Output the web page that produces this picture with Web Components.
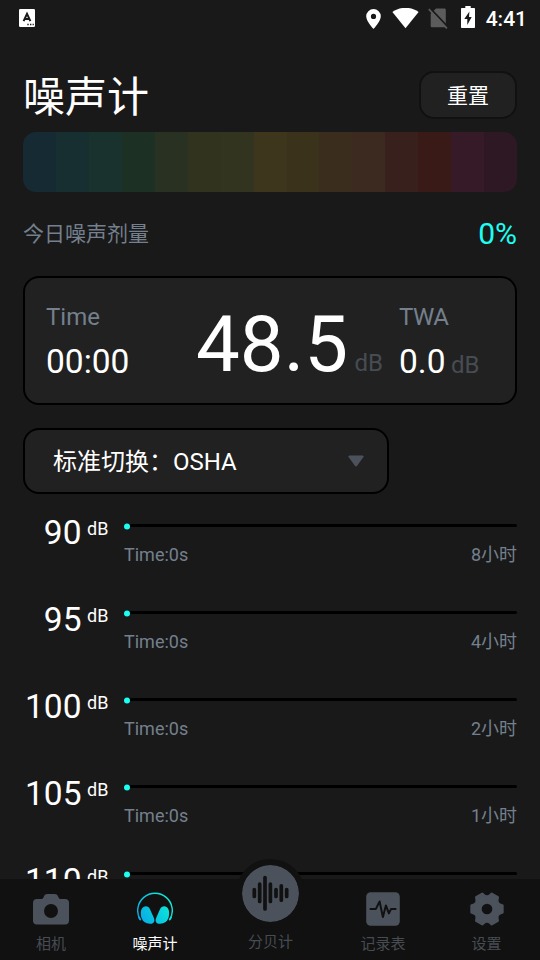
<!DOCTYPE html>
<html lang="zh-CN">
<head>
<meta charset="utf-8">
<title>噪声计</title>
<style>
  html, body { margin: 0; height: 100%; background: #191919; }
  body {
    font-family: Roboto, "Noto Sans CJK SC", sans-serif;
    color: #fff;
    overflow: hidden;
  }
</style>
</head>
<body>
<noise-app></noise-app>

<script>
/** Small helper: attach an open root and fill it. */
class BaseElement extends HTMLElement {
  constructor() {
    super();
    this.attachShadow({ mode: 'open' });
  }

  connectedCallback() {
    this.shadowRoot.innerHTML = this.template();
  }

  template() { return ''; }
}

/** <status-bar> — system icons and clock */
class StatusBar extends BaseElement {
  template() {
    return `
      <style>
        :host { display: flex; align-items: center; height: 36px; padding: 0 13px 0 19px; flex: none; }
        svg { display: block; flex: none; }
        .spacer { flex: 1; }
        .pin { margin: 2px 11px 0 0; }
        .wifi { margin-right: 9px; }
        .sim { margin-right: 13px; }
        .battery { margin: -2px 11px 0 0; }
        .clock { font-size: 21px; font-weight: 500; line-height: 36px; padding-top: 1px; }
      </style>
      <svg width="16" height="18" viewBox="0 0 16 18">
        <rect width="16" height="18" rx="1.2" fill="#fff"/>
        <path d="M4.600 12.200 8 4.800l3.400 7.400M5.900 10h4.200" fill="none" stroke="#191919" stroke-width="2"/>
        <path d="M8.300 15.500h1.400M11 15.500h1.400M13.600 15.500h1.200" stroke="#191919" stroke-width="1.400"/>
      </svg>
      <span class="spacer"></span>
      <svg class="pin" width="15" height="20" viewBox="0 0 15 20">
        <path fill="#fff" fill-rule="evenodd" d="M7.500 0A7.300 7.300 0 0 0 .2 7.300C.2 12.600 7.500 20 7.500 20s7.300-7.400 7.300-12.700A7.300 7.300 0 0 0 7.500 0Zm0 4.800a2.600 2.600 0 1 1 0 5.200 2.600 2.600 0 0 1 0-5.200Z"/>
      </svg>
      <svg class="wifi" width="27" height="21" viewBox="0 0 27 21">
        <path fill="#fff" d="M13.500 20.300.4 4.100C4 1.200 8.500-.2 13.500-.2S23 1.200 26.600 4.100Z"/>
      </svg>
      <svg class="sim" width="20" height="21" viewBox="0 0 20 21">
        <path fill="#5c5c5c" d="M8 .5h8.500c.8 0 1.300.6 1.300 1.300v17.400H4c-.8 0-1.300-.5-1.300-1.300V5.800Z"/>
        <path d="M1.900.1 20 19.300" stroke="#191919" stroke-width="2"/>
        <path d="M.8 1.200 18.900 20.400" stroke="#5c5c5c" stroke-width="1.700"/>
      </svg>
      <svg class="battery" width="14" height="22" viewBox="0 0 14 22">
        <path fill="#fff" d="M4.300 0h5.400v2H13c.6 0 1 .4 1 1v18c0 .6-.4 1-1 1H1c-.6 0-1-.4-1-1V3c0-.6.4-1 1-1h3.300Z"/>
        <path fill="#191919" d="M8.400 5.500 3.300 13h3v6L10.700 11H8Z"/>
      </svg>
      <span class="clock">4:41</span>
    `;
  }
}

/** <page-header> — slotted title with the reset button */
class PageHeader extends BaseElement {
  template() {
    return `
      <style>
        :host { display: flex; justify-content: space-between; align-items: center; height: 48px; margin-top: 35px; }
        h1 { margin: 0; padding-top: 5px; font-size: 42px; font-weight: 400; line-height: 48px; }
        button {
          box-sizing: border-box; width: 98px; height: 48px; padding: 2px 0 0;
          border: 2px solid #111; border-radius: 15px; background: #212121;
          color: #fff; font: inherit; font-size: 21px; line-height: 42px;
        }
      </style>
      <h1><slot></slot></h1>
      <button>重置</button>
    `;
  }
}

/** <level-bar> — dimmed colour scale, one cell per step */
class LevelBar extends BaseElement {
  template() {
    const colors = [
      '#162a33', '#172f31', '#19322d', '#1c3023', '#293222',
      '#32331f', '#323420', '#3d361d', '#3a321b', '#3b2d1e',
      '#3c2920', '#38211c', '#391a16', '#371a28', '#2e1824',
    ];
    return `
      <style>
        :host { display: flex; height: 60px; margin-top: 13px; border-radius: 13px; overflow: hidden; }
        i { flex: 1; }
      </style>
      ${colors.map((c) => `<i style="background:${c}"></i>`).join('')}
    `;
  }
}

/** <dose-row value="0%"> */
class DoseRow extends BaseElement {
  template() {
    return `
      <style>
        :host { display: flex; justify-content: space-between; align-items: center; height: 84px; }
        .label { font-size: 21px; line-height: 30px; padding-bottom: 1px; color: #74808d; }
        .value { font-size: 30px; line-height: 36px; color: #1efff3; }
      </style>
      <span class="label"><slot></slot></span>
      <span class="value">${this.getAttribute('value')}</span>
    `;
  }
}

/** <reading-card> — elapsed time, current level, weighted average */
class ReadingCard extends BaseElement {
  template() {
    return `
      <style>
        :host {
          box-sizing: border-box; display: grid; grid-template-columns: 150px 203px 1fr; align-items: start;
          height: 129px; padding: 25px 0 0 21px;
          border: 2px solid #000; border-radius: 16px; background: #212121;
          white-space: nowrap;
        }
        .label { font-size: 24px; line-height: 28px; color: #74808d; }
        .twa { letter-spacing: -.5px; }
        .value { margin-top: 11px; font-size: 33.5px; line-height: 40px; }
        .main { margin-top: 2px; font-size: 78px; line-height: 80px; }
        .unit { font-size: 24px; color: #474c53; line-height: 1; margin-left: 5.5px; }
        .main .unit { margin-left: 6.5px; }
      </style>
      <div>
        <div class="label">Time</div>
        <div class="value">00:00</div>
      </div>
      <div class="main">48.5<span class="unit">dB</span></div>
      <div>
        <div class="label twa">TWA</div>
        <div class="value">0.0<span class="unit">dB</span></div>
      </div>
    `;
  }
}

/** <standard-select> — closed dropdown */
class StandardSelect extends BaseElement {
  template() {
    return `
      <style>
        :host {
          box-sizing: border-box; display: flex; align-items: center; justify-content: space-between;
          width: 366px; height: 66px; margin-top: 23px; padding: 0 23px 0 28px;
          border: 2px solid #000; border-radius: 16px; background: #212121;
          font-size: 24px; line-height: 30px;
        }
        span { padding-top: 2px; }
        svg { display: block; }
      </style>
      <span><slot></slot></span>
      <svg width="16" height="12" viewBox="0 0 16 12">
        <path fill="#4c525b" d="M1.500.5h13c1 0 1.400.8.8 1.700L9.100 10.800c-.6.8-1.600.8-2.200 0L.7 2.200C.1 1.300.5.500 1.500.500Z"/>
      </svg>
    `;
  }
}

/** <limit-row level="90" limit="8小时"> */
class LimitRow extends BaseElement {
  template() {
    return `
      <style>
        :host { display: grid; grid-template-columns: 58.500px 42.500px 1fr; height: 87px; }
        .level { padding-top: 20px; text-align: right; font-size: 33.5px; line-height: 38px; white-space: nowrap; }
        .unit { padding: 24px 0 0 5.500px; font-size: 18px; line-height: 22px; }
        .track { height: 3px; margin-top: 30px; background: #000; border-radius: 0 2px 2px 0; display: flex; align-items: center; }
        .track i { width: 6px; height: 6px; border-radius: 50%; background: #1efff3; flex: none; transform: translateY(.5px); }
        .info { display: flex; justify-content: space-between; margin-top: 16px; font-size: 18px; line-height: 24px; color: #74808d; }
      </style>
      <div class="level">${this.getAttribute('level')}</div>
      <div class="unit">dB</div>
      <div>
        <div class="track"><i></i></div>
        <div class="info"><span>Time:0s</span><span>${this.getAttribute('limit')}</span></div>
      </div>
    `;
  }
}

/** <nav-item label="..." active raised> — icon goes in the slot */
class NavItem extends BaseElement {
  template() {
    return `
      <style>
        :host { display: flex; flex-direction: column; align-items: center; color: #4c525b; }
        .icon { display: flex; align-items: center; justify-content: center; height: 36px; margin-top: 12px; }
        .label { margin-top: 7px; font-size: 15px; line-height: 20px; color: #474c53; }
        :host([active]) .label { color: #fff; }
        :host([raised]) .icon {
          width: 57px; height: 57px; margin-top: -20px;
          border: 6px solid #111; border-radius: 50%; background: #4c525b; background-clip: padding-box;
        }
        :host([raised]) .label { margin-top: 4px; }
        ::slotted(svg) { display: block; }
      </style>
      <div class="icon"><slot></slot></div>
      <div class="label">${this.getAttribute('label')}</div>
    `;
  }
}

/** <tab-bar> */
class TabBar extends BaseElement {
  gear() {
    // six teeth, the first one pointing right
    const pts = [];
    for (let k = 0; k < 6; k++) {
      [[-30, 12.600], [-21, 13.500], [-13, 16.100], [13, 16.100], [21, 13.500]].forEach(([a, r]) => {
        const t = (k * 60 + a) * Math.PI / 180;
        pts.push(`${(18 + r * Math.cos(t)).toFixed(2)} ${(18 + r * Math.sin(t)).toFixed(2)}`);
      });
    }
    return `M${pts.join('L')}Z`;
  }

  template() {
    return `
      <style>
        :host { display: grid; grid-template-columns: 102px 106px 125px 100px 107px; height: 81px; background: #111; flex: none; position: relative; }
      </style>
      <nav-item label="相机">
        <svg width="36" height="36" viewBox="0 0 36 36">
          <path fill="currentColor" fill-rule="evenodd" d="M4 8h4.500c1.500 0 1.700-1 2.400-2.500C11.700 3.700 12.700 3 14.500 3h7c1.800 0 2.800.7 3.600 2.500C25.800 7 26 8 27.500 8H32a4 4 0 0 1 4 4v17.500a4 4 0 0 1-4 4H4a4 4 0 0 1-4-4V12a4 4 0 0 1 4-4Zm14 5a7 7 0 1 0 0 14 7 7 0 0 0 0-14Z"/>
        </svg>
      </nav-item>
      <nav-item label="噪声计" active>
        <svg width="36" height="36" viewBox="0 0 36 36">
          <defs>
            <linearGradient id="cy" gradientUnits="userSpaceOnUse" x1="2" y1="30" x2="32" y2="10">
              <stop offset="0" stop-color="#08a8e6"/><stop offset="1" stop-color="#0cebd9"/>
            </linearGradient>
          </defs>
          <path d="M3.200 28.500A17.300 17.300 0 1 1 32.800 28.500" fill="none" stroke="url(#cy)" stroke-width="1.400"/>
          <path d="M2 26.500 3.300 28.600M34 26.500 32.700 28.600" fill="none" stroke="url(#cy)" stroke-width="1.800" stroke-linecap="round"/>
          <path fill="url(#cy)" d="M6.500 15.900C9 14.600 11.600 15.400 12.900 17.900L16.900 26.900C18.200 30.300 16.900 32.500 13.700 32.700 9.300 33 6.100 31.300 4.700 27.300 3.100 22.600 3.700 17.500 6.500 15.900Z"/>
          <path fill="url(#cy)" d="M29.500 15.900C27 14.600 24.400 15.400 23.100 17.900L19.100 26.900C17.800 30.300 19.100 32.500 22.300 32.700 26.700 33 29.900 31.300 31.300 27.300 32.900 22.600 32.300 17.500 29.500 15.900Z"/>
        </svg>
      </nav-item>
      <nav-item label="分贝计" raised>
        <svg width="57" height="57" viewBox="0 0 57 57">
          <path d="M12.300 24.500v7M17.700 19.200v17.300M23 12.500v31.500M28.400 19.200v17.300M34 24.500v7M39.300 20.800v14.400M44.700 24.500v7" stroke="#111" stroke-width="3.700" stroke-linecap="round"/>
        </svg>
      </nav-item>
      <nav-item label="记录表">
        <svg width="36" height="36" viewBox="0 0 36 36">
          <rect x="1.200" y="1.200" width="33.600" height="33.600" rx="4.500" fill="currentColor"/>
          <path d="M5.500 17.900h5.400l3.700-7.400 3.300 15.600 3-11.700 3 8 2.200-4.500h4.500" fill="none" stroke="#111" stroke-width="2" stroke-linecap="round" stroke-linejoin="round"/>
        </svg>
      </nav-item>
      <nav-item label="设置">
        <svg width="36" height="36" viewBox="0 0 36 36">
          <path d="${this.gear()}" fill="currentColor" stroke="currentColor" stroke-width="2" stroke-linejoin="round"/>
          <circle cx="18" cy="18" r="5.300" fill="#111"/>
        </svg>
      </nav-item>
    `;
  }
}

/** <noise-app> — the whole screen */
class NoiseApp extends BaseElement {
  template() {
    return `
      <style>
        :host { display: flex; flex-direction: column; height: 960px; width: 540px; overflow: hidden; background: #191919; }
        main { flex: 1; min-height: 0; overflow: hidden; padding: 0 23px; }
      </style>
      <status-bar></status-bar>
      <main>
        <page-header>噪声计</page-header>
        <level-bar></level-bar>
        <dose-row value="0%">今日噪声剂量</dose-row>
        <reading-card></reading-card>
        <standard-select>标准切换：OSHA</standard-select>
        <limit-row level="90" limit="8小时"></limit-row>
        <limit-row level="95" limit="4小时"></limit-row>
        <limit-row level="100" limit="2小时"></limit-row>
        <limit-row level="105" limit="1小时"></limit-row>
        <limit-row level="110" limit=""></limit-row>
      </main>
      <tab-bar></tab-bar>
    `;
  }
}

customElements.define('status-bar', StatusBar);
customElements.define('page-header', PageHeader);
customElements.define('level-bar', LevelBar);
customElements.define('dose-row', DoseRow);
customElements.define('reading-card', ReadingCard);
customElements.define('standard-select', StandardSelect);
customElements.define('limit-row', LimitRow);
customElements.define('nav-item', NavItem);
customElements.define('tab-bar', TabBar);
customElements.define('noise-app', NoiseApp);
</script>
</body>
</html>
